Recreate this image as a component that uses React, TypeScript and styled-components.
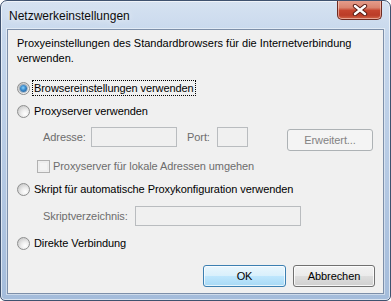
import React from 'react'
import styled, { createGlobalStyle } from 'styled-components'

const GlobalStyle = createGlobalStyle`
  html, body {
    margin: 0;
    padding: 0;
    background: #ffffff;
  }
  body {
    font-family: "Liberation Sans", Arial, sans-serif;
    font-size: 11px;
    letter-spacing: -0.08px;
    color: #000000;
  }
`

export default function App(): JSX.Element {
  return (
    <>
      <GlobalStyle />
      <Window>
        <TitleBar>
          <Title>Netzwerkeinstellungen</Title>
          <CloseButton aria-label="Schließen">
            <svg width="16" height="12" viewBox="0 0 16 12">
              <path
                d="M3 2 L13 10 M13 2 L3 10"
                stroke="#5a1e16"
                strokeWidth="4.4"
                strokeLinecap="round"
              />
              <path
                d="M3 2 L13 10 M13 2 L3 10"
                stroke="#ffffff"
                strokeWidth="2.4"
                strokeLinecap="round"
              />
            </svg>
          </CloseButton>
        </TitleBar>
        <Client>
          <Description>
            Proxyeinstellungen des Standardbrowsers für die Internetverbindung
            verwenden.
          </Description>

          <OptionRow $top={11}>
            <Radio $checked />
            <FocusLabel>Browsereinstellungen verwenden</FocusLabel>
          </OptionRow>

          <OptionRow $top={1}>
            <Radio />
            <span>Proxyserver verwenden</span>
          </OptionRow>

          <FieldRow $top={3}>
            <FieldLabel $width={48}>Adresse:</FieldLabel>
            <TextBox $width={86} />
            <FieldLabel $width={30} $gap={10}>
              Port:
            </FieldLabel>
            <TextBox $width={31} />
            <DialogButton $variant="disabled" $width={86} $gap={39} $top={4}>
              Erweitert...
            </DialogButton>
          </FieldRow>

          <CheckRow>
            <CheckBox />
            <DisabledText>Proxyserver für lokale Adressen umgehen</DisabledText>
          </CheckRow>

          <OptionRow $top={1}>
            <Radio />
            <span>Skript für automatische Proxykonfiguration verwenden</span>
          </OptionRow>

          <FieldRow $top={4}>
            <FieldLabel $width={92}>Skriptverzeichnis:</FieldLabel>
            <TextBox $width={166} />
          </FieldRow>

          <OptionRow $top={4}>
            <Radio />
            <span>Direkte Verbindung</span>
          </OptionRow>

          <Footer>
            <DialogButton $variant="default" $width={83}>
              OK
            </DialogButton>
            <DialogButton $variant="normal" $width={82}>
              Abbrechen
            </DialogButton>
          </Footer>
        </Client>
      </Window>
    </>
  )
}

const Window = styled.div`
  box-sizing: border-box;
  width: 391px;
  height: 301px;
  display: flex;
  flex-direction: column;
  border: 1px solid #3f526f;
  border-radius: 7px 7px 5px 5px;
  background: linear-gradient(
    180deg,
    #d6e2f1 0%,
    #c6d7ec 12%,
    #b6cae4 55%,
    #a4bcdb 100%
  );
  box-shadow: inset 0 0 0 1px rgba(255, 255, 255, 0.6);
  overflow: hidden;
`

const TitleBar = styled.div`
  height: 28px;
  display: flex;
  align-items: flex-start;
  padding-left: 8px;
  padding-right: 8px;
`

const Title = styled.div`
  font-size: 12px;
  letter-spacing: 0;
  line-height: 16px;
  margin-top: 7px;
  color: #0c0c0c;
  text-shadow: 0 0 6px rgba(255, 255, 255, 0.9);
`

const CloseButton = styled.div`
  box-sizing: border-box;
  margin-left: auto;
  margin-top: -1px;
  width: 45px;
  height: 20px;
  display: flex;
  align-items: center;
  justify-content: center;
  border: 1px solid #6e2a20;
  border-top: none;
  border-radius: 0 0 5px 5px;
  background: linear-gradient(
    180deg,
    #e6a08f 0%,
    #d9846f 40%,
    #c5452f 55%,
    #bb3c27 80%,
    #d0664a 100%
  );
  box-shadow: inset 0 0 0 1px rgba(255, 220, 210, 0.55);
`

const Client = styled.div`
  flex: 1;
  display: flex;
  flex-direction: column;
  margin: 0 6px 6px 6px;
  padding: 0 8px 0 9px;
  background: #f0f0f0;
  border: 1px solid #7d8fa9;
  box-shadow: 0 0 0 1px rgba(255, 255, 255, 0.45);
`

const Description = styled.div`
  margin-top: 6px;
  height: 30px;
  line-height: 15px;
  letter-spacing: 0;
`

const OptionRow = styled.div<{ $top: number }>`
  display: flex;
  align-items: center;
  gap: 4px;
  height: 22px;
  margin-top: ${(p) => p.$top}px;
  white-space: nowrap;
`

const Radio = styled.span<{ $checked?: boolean }>`
  box-sizing: border-box;
  position: relative;
  width: 13px;
  height: 13px;
  flex: none;
  border-radius: 50%;
  border: 1px solid #8e8f8f;
  background: radial-gradient(
    circle at 65% 70%,
    #ffffff 0%,
    #eeeeee 35%,
    #cfcfcf 75%,
    #c0c0c0 100%
  );
  &::after {
    content: '';
    display: ${(p) => (p.$checked ? 'block' : 'none')};
    position: absolute;
    left: 2px;
    top: 2px;
    width: 7px;
    height: 7px;
    border-radius: 50%;
    background: radial-gradient(
      circle at 45% 40%,
      #8ad2fb 0%,
      #3f8fd0 40%,
      #1a4f86 100%
    );
    box-shadow: 0 0 0 1px rgba(40, 80, 120, 0.35);
  }
`

const FocusLabel = styled.span`
  margin-left: -1px;
  padding: 0 1px;
  line-height: 14px;
  outline: 1px dotted #000000;
`

const FieldRow = styled.div<{ $top: number }>`
  display: flex;
  align-items: flex-start;
  height: 24px;
  margin-top: ${(p) => p.$top}px;
  padding-left: 26px;
`

const FieldLabel = styled.span<{ $width: number; $gap?: number }>`
  width: ${(p) => p.$width}px;
  margin-left: ${(p) => p.$gap ?? 0}px;
  flex: none;
  line-height: 24px;
  color: #6d6d6d;
  white-space: nowrap;
`

const TextBox = styled.div<{ $width: number }>`
  box-sizing: border-box;
  width: ${(p) => p.$width}px;
  height: 20px;
  margin-top: 2px;
  flex: none;
  border: 1px solid #b9bcbf;
  background: #f0f0f0;
`

const CheckRow = styled.div`
  display: flex;
  align-items: center;
  gap: 3px;
  height: 22px;
  margin-top: 6px;
  padding-left: 20px;
  white-space: nowrap;
`

const CheckBox = styled.span`
  box-sizing: border-box;
  width: 13px;
  height: 13px;
  flex: none;
  border: 1px solid #b1b1b1;
  background: #f4f4f4;
  box-shadow: inset 0 0 0 2px #eeeeee;
`

const DisabledText = styled.span`
  color: #6d6d6d;
`

const buttonSkins = {
  normal: `
    border-color: #707070;
    color: #000000;
    background: linear-gradient(180deg, #f2f2f2 0%, #ebebeb 48%, #dddddd 52%, #cfcfcf 100%);
    box-shadow: inset 0 0 0 1px rgba(255, 255, 255, 0.8);
  `,
  default: `
    border-color: #3c7fb1;
    color: #000000;
    background: linear-gradient(180deg, #eaf6fd 0%, #d9f0fc 48%, #bee6fd 52%, #a7d9f5 100%);
    box-shadow: inset 0 0 0 1px rgba(255, 255, 255, 0.7);
  `,
  disabled: `
    border-color: #adb2b5;
    color: #838383;
    background: #f4f4f4;
  `,
}

const DialogButton = styled.div<{
  $variant: keyof typeof buttonSkins
  $width: number
  $gap?: number
  $top?: number
}>`
  box-sizing: border-box;
  width: ${(p) => p.$width}px;
  height: 22px;
  flex: none;
  margin-left: ${(p) => p.$gap ?? 0}px;
  margin-top: ${(p) => p.$top ?? 0}px;
  display: flex;
  align-items: center;
  justify-content: center;
  border: 1px solid;
  border-radius: 3px;
  ${(p) => buttonSkins[p.$variant]}
`

const Footer = styled.div`
  display: flex;
  justify-content: flex-end;
  gap: 7px;
  margin-top: 11px;
`
